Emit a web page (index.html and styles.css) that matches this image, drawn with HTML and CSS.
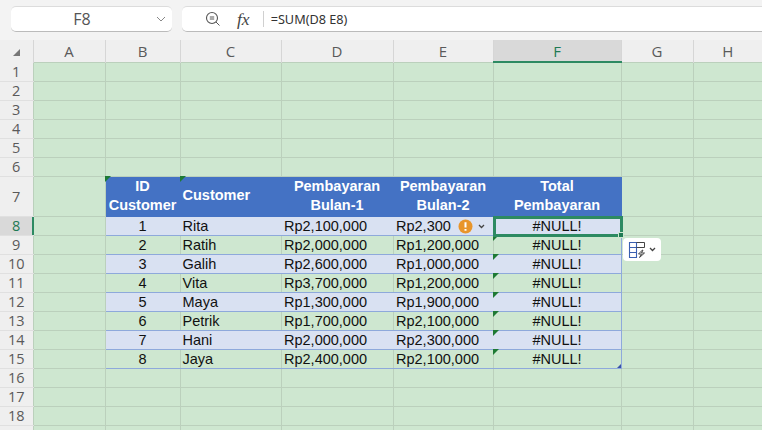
FILE: index.html
```html
<!DOCTYPE html>
<html lang="en">
<head>
    <meta charset="UTF-8">
    <meta name="viewport" content="width=device-width, initial-scale=1.0">
    <title>Total Pembayaran</title>
    <link rel="stylesheet" href="styles.css">
</head>
<body>
    <div class="formula-bar">
        <div class="name-box">
            <span class="cell-ref">F8</span>
            <svg class="chevron" width="10" height="6" viewBox="0 0 10 6"><path d="M1 1l4 4 4-4" fill="none" stroke="#888" stroke-width="1"/></svg>
        </div>
        <div class="formula-box">
            <svg class="zoom-icon" width="16" height="16" viewBox="0 0 16 16"><circle cx="7" cy="7" r="5.5" fill="none" stroke="#555" stroke-width="1.1"/><path d="M4.8 6h4.4M4.8 8h4.4M11 11l3.5 3.5" fill="none" stroke="#555" stroke-width="1"/></svg>
            <span class="fx">fx</span>
            <span class="formula-sep"></span>
            <span class="formula-text">=SUM(D8 E8)</span>
        </div>
    </div>

    <table class="sheet">
        <colgroup>
            <col class="col-rh"><col class="col-a"><col class="col-b"><col class="col-c"><col class="col-d"><col class="col-e"><col class="col-f"><col class="col-g"><col class="col-h">
        </colgroup>
        <thead>
            <tr class="col-heads">
                <th class="corner"><svg width="7" height="7" viewBox="0 0 7 7"><path d="M7 0v7H0z" fill="#777"/></svg></th>
                <th>A</th><th>B</th><th>C</th><th>D</th><th>E</th><th class="active-col">F</th><th>G</th><th>H</th>
            </tr>
        </thead>
        <tbody>
            <tr><th>1</th><td></td><td></td><td></td><td></td><td></td><td></td><td></td><td></td></tr>
            <tr><th>2</th><td></td><td></td><td></td><td></td><td></td><td></td><td></td><td></td></tr>
            <tr><th>3</th><td></td><td></td><td></td><td></td><td></td><td></td><td></td><td></td></tr>
            <tr><th>4</th><td></td><td></td><td></td><td></td><td></td><td></td><td></td><td></td></tr>
            <tr><th>5</th><td></td><td></td><td></td><td></td><td></td><td></td><td></td><td></td></tr>
            <tr><th>6</th><td></td><td></td><td></td><td></td><td></td><td></td><td></td><td></td></tr>
            <tr class="table-head">
                <th>7</th><td></td>
                <td class="head flag">ID<br>Customer</td>
                <td class="head head-left flag">Customer</td>
                <td class="head">Pembayaran<br>Bulan-1</td>
                <td class="head">Pembayaran<br>Bulan-2</td>
                <td class="head">Total<br>Pembayaran</td>
                <td></td><td></td>
            </tr>
            <tr class="band active-row">
                <th>8</th><td></td>
                <td class="d num">1</td><td class="d">Rita</td><td class="d money">Rp2,100,000</td>
                <td class="d money warn-cell">Rp2,300
                    <span class="warn-tag">
                        <svg width="15" height="15" viewBox="0 0 15 15"><circle cx="7.5" cy="7.5" r="7" fill="#e8952b"/><path d="M7.5 3.2v5.2M7.5 10v1.8" stroke="#fff" stroke-width="2" fill="none"/></svg>
                        <svg width="7" height="5" viewBox="0 0 7 5"><path d="M1 1l2.5 2.5L6 1" fill="none" stroke="#444" stroke-width="1.3"/></svg>
                    </span>
                </td>
                <td class="d num selected">#NULL!
                    <span class="smart-tag">
                        <svg width="17" height="17" viewBox="0 0 17 17"><path d="M1.5 1.500h7v15h-7zM1.500 6.500h7M1.500 11.500h7" fill="none" stroke="#3a5fb0" stroke-width="1.100"/><path d="M8.500 1.500h8v5h-8" fill="none" stroke="#444" stroke-width="1"/><path d="M14.500 9l-4 4h3l-2 3.500 5-4.500h-3l1.500-3z" fill="none" stroke="#444" stroke-width="1"/></svg>
                        <svg width="7" height="5" viewBox="0 0 7 5"><path d="M1 1l2.500 2.500L6 1" fill="none" stroke="#444" stroke-width="1.3"/></svg>
                    </span>
                </td>
                <td></td><td></td>
            </tr>
            <tr><th>9</th><td></td><td class="d num">2</td><td class="d">Ratih</td><td class="d money">Rp2,000,000</td><td class="d money">Rp1,200,000</td><td class="d num flag">#NULL!</td><td></td><td></td></tr>
            <tr class="band"><th>10</th><td></td><td class="d num">3</td><td class="d">Galih</td><td class="d money">Rp2,600,000</td><td class="d money">Rp1,000,000</td><td class="d num flag">#NULL!</td><td></td><td></td></tr>
            <tr><th>11</th><td></td><td class="d num">4</td><td class="d">Vita</td><td class="d money">Rp3,700,000</td><td class="d money">Rp1,200,000</td><td class="d num flag">#NULL!</td><td></td><td></td></tr>
            <tr class="band"><th>12</th><td></td><td class="d num">5</td><td class="d">Maya</td><td class="d money">Rp1,300,000</td><td class="d money">Rp1,900,000</td><td class="d num flag">#NULL!</td><td></td><td></td></tr>
            <tr><th>13</th><td></td><td class="d num">6</td><td class="d">Petrik</td><td class="d money">Rp1,700,000</td><td class="d money">Rp2,100,000</td><td class="d num flag">#NULL!</td><td></td><td></td></tr>
            <tr class="band"><th>14</th><td></td><td class="d num">7</td><td class="d">Hani</td><td class="d money">Rp2,000,000</td><td class="d money">Rp2,300,000</td><td class="d num flag">#NULL!</td><td></td><td></td></tr>
            <tr><th>15</th><td></td><td class="d num">8</td><td class="d">Jaya</td><td class="d money">Rp2,400,000</td><td class="d money">Rp2,100,000</td><td class="d num flag resize">#NULL!</td><td></td><td></td></tr>
            <tr><th>16</th><td></td><td></td><td></td><td></td><td></td><td></td><td></td><td></td></tr>
            <tr><th>17</th><td></td><td></td><td></td><td></td><td></td><td></td><td></td><td></td></tr>
            <tr><th>18</th><td></td><td></td><td></td><td></td><td></td><td></td><td></td><td></td></tr>
            <tr><th></th><td></td><td></td><td></td><td></td><td></td><td></td><td></td><td></td></tr>
        </tbody>
    </table>
</body>
</html>
```

FILE: styles.css
```css
html, body {
    margin: 0;
    height: 430px;
    overflow: hidden;
    background-color: #efefef;
}

body {
    font-family: "Liberation Sans", Arial, sans-serif;
    color: #111;
}

.formula-bar {
    display: flex;
    gap: 10px;
    height: 40px;
    box-sizing: border-box;
    padding: 6px 0 0 11px;
    background-color: #f3f3f3;
}

.name-box, .formula-box {
    display: flex;
    align-items: center;
    height: 26px;
    box-sizing: border-box;
    background-color: white;
    border-bottom: 1px solid #bbb;
    border-top: 1px solid #dcdcdc;
}

.name-box {
    width: 161px;
    border-radius: 5px;
}

.cell-ref {
    flex: 1;
    text-align: center;
    padding-right: 3px;
    font-family: "Open Sans", sans-serif;
    font-size: 16px;
    color: #555;
}

.chevron {
    margin-right: 6px;
}

.formula-box {
    flex: 1;
    border-radius: 5px 0 0 5px;
}

.zoom-icon {
    margin-left: 23px;
}

.fx {
    margin-left: 16px;
    font-family: "Liberation Serif", serif;
    font-style: italic;
    font-size: 17.500px;
    color: #444;
}

.formula-sep {
    width: 1px;
    height: 16px;
    margin: 0 7px 0 13px;
    background-color: #d0d0d0;
}

.formula-text {
    font-family: "Noto Sans", sans-serif;
    font-size: 12.700px;
    color: #333;
}

/* sheet grid */
.sheet {
    table-layout: fixed;
    border-collapse: collapse;
    width: 762px;
}

.col-rh { width: 33px; }
.col-a { width: 72px; }
.col-b { width: 75px; }
.col-c { width: 101px; }
.col-d { width: 112px; }
.col-e { width: 100px; }
.col-f { width: 128px; }
.col-g { width: 72px; }
.col-h { width: 69px; }

.sheet tr {
    height: 19px;
}

.sheet td {
    padding: 0 2px;
    background-color: #cee7d0;
    border: 1px solid #bbd0bc;
    font-size: 14.500px;
    line-height: 16px;
    white-space: nowrap;
    position: relative;
}

.sheet th {
    padding: 1px 0 0;
    background-color: #efefef;
    border-bottom: 1px solid #e0e0e0;
    font-family: "Open Sans", sans-serif;
    font-size: 14.500px;
    font-weight: 400;
    line-height: 16px;
    color: #5a5a5a;
}

.sheet .col-heads {
    height: 22px;
}

.sheet .col-heads th {
    box-sizing: border-box;
    height: 22px;
    padding: 0;
    border-bottom: none;
    border-left: 1px solid #d6d6d6;
    font-size: 15px;
}

.sheet .col-heads .corner {
    border-left: none;
    text-align: center;
}

.corner svg {
    vertical-align: 1px;
}

.sheet .col-heads .active-col {
    background-color: #d9d9d9;
    border-bottom: 2px solid #2d8a62;
    color: #1f7a54;
}

.sheet .table-head {
    height: 39px;
}

.sheet .head {
    background-color: #4472c4;
    border-color: #4472c4;
    color: white;
    font-weight: 700;
    text-align: center;
    line-height: 19.500px;
}

.sheet .head-left {
    text-align: left;
}

.sheet .d {
    padding-top: 1px;
    border-color: #8ea9db;
    border-left-color: #bbd0bc;
    border-right-color: #bbd0bc;
}

.sheet .band .d {
    background-color: #d9e1f2;
    border-left-color: #d9e1f2;
    border-right-color: #d9e1f2;
}

.sheet .d:nth-child(3),
.sheet .band .d:nth-child(3) {
    border-left-color: #8ea9db;
}

.sheet .d:nth-child(7),
.sheet .band .d:nth-child(7) {
    border-right-color: #8ea9db;
}

.num {
    text-align: center;
}

.sheet .money {
    padding-left: 2.500px;
}

.sheet .active-row th {
    background-color: #d9d9d9;
    color: #1f7a54;
    position: relative;
}

.active-row th::after {
    content: "";
    position: absolute;
    top: 0;
    bottom: 0;
    right: -1px;
    width: 2px;
    background-color: #2d8a62;
}

/* green error corner */
.flag::before {
    content: "";
    position: absolute;
    top: -1px;
    left: -1px;
    border-top: 6px solid #1e7a34;
    border-right: 6px solid transparent;
}

.resize::after {
    content: "";
    position: absolute;
    right: 0;
    bottom: 0;
    border-bottom: 4px solid #3a52a8;
    border-left: 4px solid transparent;
}

.warn-tag {
    position: absolute;
    top: 2px;
    left: 64px;
    display: flex;
    align-items: center;
    gap: 5px;
}

.sheet .selected {
    z-index: 1;
}

.selected::before {
    content: "";
    position: absolute;
    top: -1px;
    left: -1px;
    right: -2px;
    bottom: -2px;
    border: 3px solid #2d8a62;
}

.selected::after {
    content: "";
    position: absolute;
    right: -3px;
    bottom: -3px;
    width: 4px;
    height: 4px;
    background-color: #1f7a54;
    border: 1px solid #cee7d0;
}

.smart-tag {
    position: absolute;
    top: 21px;
    left: 129px;
    display: flex;
    align-items: center;
    gap: 4px;
    width: 38px;
    height: 23px;
    box-sizing: border-box;
    padding-left: 5px;
    background-color: white;
    border-radius: 4px;
}
```
